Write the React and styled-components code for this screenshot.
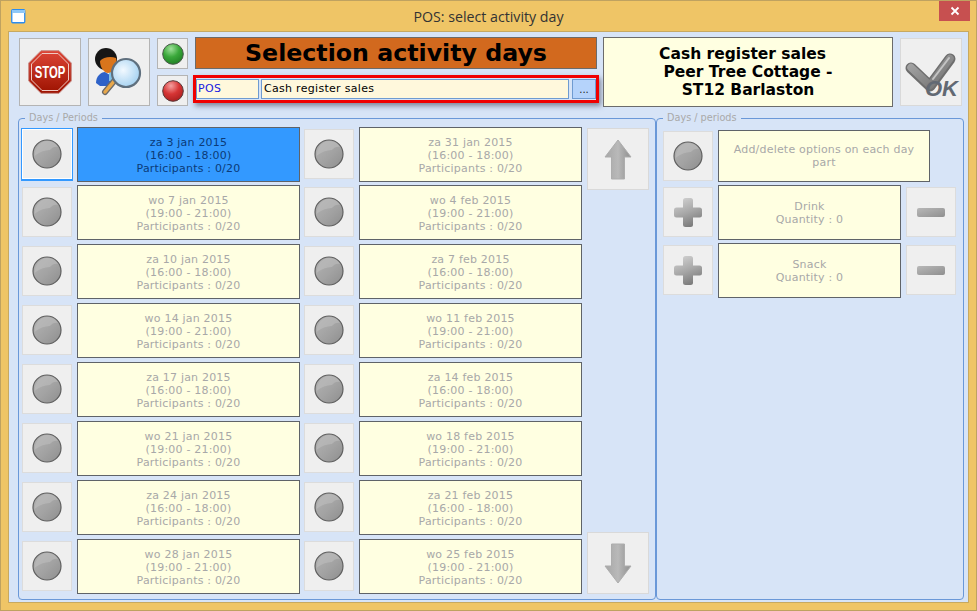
import React from "react";
import styled, { createGlobalStyle } from "styled-components";

const Global = createGlobalStyle`
  html, body { margin: 0; padding: 0; background: #fff; }
  * { box-sizing: border-box; }
`;

const Win = styled.div`
  width: 977px; height: 611px; background: #efc566;
  border: 1px solid #bfa260; display: flex; flex-direction: column;
  font-family: "DejaVu Sans", Verdana, sans-serif; overflow: hidden;
`;
const TitleBar = styled.div`
  height: 30px; flex: none; display: flex; align-items: center; position: relative;
  padding-left: 10px;
`;
const TitleText = styled.div`
  position: absolute; left: 0; right: 0; top: 7px; text-align: center;
  font: 14.2px/17px "Open Sans", "Noto Sans", sans-serif; color: #333;
`;
const CloseBtn = styled.div`
  position: absolute; right: 6px; top: 0; width: 31px; height: 20px; background: #c75050;
  display: flex; align-items: center; justify-content: center;
`;
const Client = styled.div`
  margin: 0 7px; height: 572px; background: #d7e4f7;
  border: 1px solid #c7a961; padding: 5px 5px 0 10px;
  display: flex; flex-direction: column;
`;
const Top = styled.div`
  display: flex; height: 70px; flex: none;
`;
const BigBtn = styled.div`
  width: ${p => p.$w || 62}px; height: ${p => p.$h || 68}px;
  background: #efefef; border: 1px solid ${p => p.$faint ? "#d9d9d9" : "#b4b4b4"};
  display: flex; align-items: center; justify-content: center; flex: none;
`;
const SearchSlot = styled.div` margin-left: 7px; `;
const Lights = styled.div`
  margin: 1px 0 0 7px; width: 31px; display: flex; flex-direction: column; gap: 6px; flex: none;
`;
const Middle = styled.div`
  margin-left: 7px; width: 402px; display: flex; flex-direction: column; flex: none;
`;
const Banner = styled.div`
  height: 32px; background: #d2691e; border: 1px solid #6b6b6b; text-align: center;
  font: bold 23.7px/30px "DejaVu Sans", sans-serif; color: #000;
`;
const RedBox = styled.div`
  margin: 6px -2px 0; height: 28px; border: 3px solid #f00000;
  box-shadow: 2px 3px 5px rgba(60,60,80,.55);
  display: flex; padding-top: 1px; background: #d7e4f7;
`;
const Code = styled.div`
  width: 63px; height: 20px; background: #fff8dc; border: 1px solid #6f9bd1;
  font-size: 11px; line-height: 18px; padding-left: 1px; color: #1a1ae0; letter-spacing: .3px;
`;
const Name = styled.div`
  margin-left: 2px; width: 308px; height: 20px; background: #fff8dc; border: 1px solid #6f9bd1;
  font-size: 11px; line-height: 18px; padding-left: 2px; color: #000; letter-spacing: .3px;
`;
const Dots = styled.div`
  margin-left: 3px; width: 24px; height: 20px; background: #b5d3fb; border: 1px solid #6f9bd1;
  font-size: 10px; line-height: 20px; text-align: center; color: #222;
`;
const Info = styled.div`
  margin-left: 6px; width: 290px; height: 70px; background: #ffffe1; border: 1px solid #6b6b6b;
  font: bold 15.5px/18px "DejaVu Sans", sans-serif; color: #000; text-align: center;
  padding-top: 7px; white-space: pre-wrap; flex: none;
`;
const OkSlot = styled.div` margin-left: 7px; margin-top: 1px; `;
const StopSlot = styled.div` margin-top: 1px; `;

const Panels = styled.div`
  display: flex; margin: 5px 0 0 -1px; align-items: flex-start;
`;
const Field = styled.fieldset`
  margin: 0; min-width: 0; border: 1px solid #6a98d8; border-radius: 4px;
  height: 488px; width: ${p => p.$w}px; padding: ${p => p.$pad}; flex: none;
`;
const Legend = styled.legend`
  margin-left: ${p => p.$ml}px; padding: 0 4px; font-size: 9.7px; line-height: 12px; color: #a9a9a9; height: 12px;
`;
const LeftBody = styled.div` display: flex; `;
const Columns = styled.div`
  display: grid; grid-template-columns: 278px 278px; column-gap: 4px; row-gap: 4px;
  grid-template-rows: 54px repeat(7, 55px); width: 560px; flex: none;
`;
const Row = styled.div` display: flex; gap: 5px; align-items: flex-start; `;
const SmallBtn = styled.div`
  width: 50px; height: 50px; flex: none; background: #efefef; margin-top: ${p => p.$mt ?? 2}px;
  border: 1px solid ${p => p.$active ? "#fff" : "#dcdcdc"};
  box-shadow: ${p => p.$active ? "0 0 0 1px #3399ff, 0 1px 0 1px #3399ff" : "none"};
  display: flex; align-items: center; justify-content: center;
`;
const Card = styled.div`
  width: ${p => p.$w || 223}px; height: ${p => p.$h || 55}px; flex: none;
  background: ${p => p.$active ? "#3399ff" : "#ffffe1"};
  border: 1px solid #5f6368; padding-top: ${p => p.$pt || 0}px;
  color: ${p => p.$active ? "#0b3b78" : "#a8a8a8"};
  font-size: 11px; line-height: 13px; text-align: center;
  display: flex; flex-direction: column; justify-content: center;
  letter-spacing: .2px;
`;
const Arrows = styled.div`
  margin: 1px 0 0 5px; height: 466px; display: flex; flex-direction: column; justify-content: space-between; flex: none;
`;
const RightRows = styled.div` display: flex; flex-direction: column; gap: 3px; `;
const RightRow = styled.div` display: flex; align-items: flex-start; gap: 5px; `;

const GreyBall = ({ id }) => (
  <svg width="30" height="30" viewBox="0 0 30 30">
    <defs>
      <linearGradient id={id} x1="0" y1="0" x2="1" y2="1">
        <stop offset="0" stopColor="#b4b4b4" />
        <stop offset=".55" stopColor="#a2a2a2" />
        <stop offset="1" stopColor="#8e8e8e" />
      </linearGradient>
    </defs>
    <circle cx="15" cy="15" r="14" fill={`url(#${id})`} stroke="#5f5f5f" strokeWidth="1.200" />
    <path d="M2.500 17C3 9 8 2 15 2c5 0 9 2 11 6-4-1-6 1-8 3-5 0-11 2-15.500 6z" fill="#c0c0c0" opacity=".55" />
  </svg>
);
const Light = ({ id, c, edge }) => (
  <svg width="22" height="22" viewBox="0 0 22 22">
    <defs>
      <radialGradient id={id} cx="40%" cy="25%" r="80%">
        <stop offset="0" stopColor={c[0]} />
        <stop offset=".5" stopColor={c[1]} />
        <stop offset="1" stopColor={c[2]} />
      </radialGradient>
    </defs>
    <circle cx="11" cy="11" r="10.300" fill={`url(#${id})`} stroke={edge} strokeWidth="1" />
  </svg>
);
const Plus = ({ id }) => (
  <svg width="28" height="29" viewBox="0 0 28 29">
    <defs>
      <linearGradient id={id} gradientUnits="userSpaceOnUse" x1="8" y1="0" x2="20" y2="29">
        <stop offset="0" stopColor="#cfcfcf" />
        <stop offset=".5" stopColor="#a6a6a6" />
        <stop offset="1" stopColor="#767676" />
      </linearGradient>
    </defs>
    <rect x="9" y="0" width="10" height="29" rx="2.500" fill={`url(#${id})`} />
    <rect x="0" y="9.500" width="28" height="10" rx="2.500" fill={`url(#${id})`} />
  </svg>
);
const Minus = ({ id }) => (
  <svg width="28" height="9" viewBox="0 0 28 9">
    <defs>
      <linearGradient id={id} x1="0" y1="0" x2="1" y2="1">
        <stop offset="0" stopColor="#b8b8b8" />
        <stop offset="1" stopColor="#8f8f8f" />
      </linearGradient>
    </defs>
    <rect x="0" y="0" width="28" height="9" rx="2" fill={`url(#${id})`} />
  </svg>
);
const Arrow = ({ id, down }) => (
  <svg width="28" height="41" viewBox="0 0 28 41" style={down ? { transform: "scaleY(-1)" } : undefined}>
    <defs>
      <linearGradient id={id} x1="0" y1="0" x2="1" y2="0">
        <stop offset="0" stopColor="#a6a6a6" />
        <stop offset=".5" stopColor="#b9b9b9" />
        <stop offset="1" stopColor="#8f8f8f" />
      </linearGradient>
    </defs>
    <path d="M14 1 27 18H20.500V40H7.500V18H1z" fill={`url(#${id})`} stroke="#adadad" strokeWidth="1" />
  </svg>
);
const Stop = () => (
  <svg width="44" height="44" viewBox="0 0 44 44">
    <defs>
      <linearGradient id="st" x1="0" y1="0" x2="0" y2="1">
        <stop offset="0" stopColor="#dd4536" />
        <stop offset="1" stopColor="#9c1200" />
      </linearGradient>
    </defs>
    <path d="M13 .7H31L43.300 13V31L31 43.300H13L.7 31V13z" fill="url(#st)" stroke="#c98c86" strokeWidth="1" />
    <path d="M14 3.500H30L40.500 14V30L30 40.500H14L3.500 30V14z" fill="none" stroke="#efc9c2" strokeWidth="1" />
    <text transform="translate(22 28) scale(.71 1)" textAnchor="middle" fontFamily="'Liberation Sans',sans-serif" fontWeight="700" fontSize="16" fill="#fff">STOP</text>
  </svg>
);
const Finder = () => (
  <svg width="50" height="50" viewBox="0 0 50 50">
    <defs>
      <radialGradient id="lens" cx="40%" cy="40%" r="60%">
        <stop offset="0" stopColor="#f2f9ff" />
        <stop offset="1" stopColor="#a9d4f2" />
      </radialGradient>
      <filter id="soft"><feGaussianBlur stdDeviation=".5" /></filter>
    </defs>
    <g filter="url(#soft)">
      <path d="M2 36C2 29 7 25 11 25L21 31 16 39 6 39z" fill="#2f62c8" />
      <path d="M15 25h8v9h-8z" fill="#7fc2e8" />
      <circle cx="12" cy="12" r="11" fill="#191919" />
      <path d="M6 14c3-4 11-5 16-3 2 6-2 15-8 15-4 0-8-6-8-12z" fill="#d9741c" />
      <path d="M21 33 L11 45" stroke="#6b6b6b" strokeWidth="6" strokeLinecap="round" />
      <path d="M21 33 L11 45" stroke="#e8a84c" strokeWidth="3.500" strokeLinecap="round" />
      <circle cx="32" cy="26" r="14" fill="url(#lens)" stroke="#5f6f7e" strokeWidth="2.200" />
    </g>
  </svg>
);
const Check = () => (
  <svg width="60" height="60" viewBox="0 0 60 60">
    <defs>
      <linearGradient id="ck" x1="0" y1="0" x2="1" y2="1">
        <stop offset="0" stopColor="#a8a8a8" />
        <stop offset="1" stopColor="#707070" />
      </linearGradient>
    </defs>
    <path d="M10 26 29 44 49 17" fill="none" stroke="#6e6e6e" strokeWidth="11" strokeLinecap="round" strokeLinejoin="round" />
    <path d="M10 25.500 29 43.500 49 16.500" fill="none" stroke="url(#ck)" strokeWidth="7.500" strokeLinecap="round" strokeLinejoin="round" />
    <path d="M32 37 48 16" stroke="#c4c4c4" strokeWidth="2" strokeLinecap="round" />
    <text x="24" y="54" fontFamily="'Liberation Sans',sans-serif" fontStyle="italic" fontWeight="700" fontSize="22" fill="#626973">OK</text>
  </svg>
);

const left = [
  ["za 3 jan 2015", "(16:00 - 18:00)"],
  ["wo 7 jan 2015", "(19:00 - 21:00)"],
  ["za 10 jan 2015", "(16:00 - 18:00)"],
  ["wo 14 jan 2015", "(19:00 - 21:00)"],
  ["za 17 jan 2015", "(16:00 - 18:00)"],
  ["wo 21 jan 2015", "(19:00 - 21:00)"],
  ["za 24 jan 2015", "(16:00 - 18:00)"],
  ["wo 28 jan 2015", "(19:00 - 21:00)"],
];
const right = [
  ["za 31 jan 2015", "(16:00 - 18:00)"],
  ["wo 4 feb 2015", "(19:00 - 21:00)"],
  ["za 7 feb 2015", "(16:00 - 18:00)"],
  ["wo 11 feb 2015", "(19:00 - 21:00)"],
  ["za 14 feb 2015", "(16:00 - 18:00)"],
  ["wo 18 feb 2015", "(19:00 - 21:00)"],
  ["za 21 feb 2015", "(16:00 - 18:00)"],
  ["wo 25 feb 2015", "(19:00 - 21:00)"],
];
const cells = left.flatMap((l, i) => [{ d: l, k: "l" + i }, { d: right[i], k: "r" + i }]);

export default function App() {
  return (
    <Win>
      <Global />
      <TitleBar>
        <svg width="15" height="15" viewBox="0 0 15 15">
          <rect x=".75" y=".75" width="13" height="13" rx="1" fill="#fff" stroke="#2a8cf0" strokeWidth="1.300" />
          <rect x="1" y="1" width="13" height="3" fill="#8fc8f8" />
        </svg>
        <TitleText>POS: select activity day</TitleText>
        <CloseBtn>
          <svg width="10" height="10" viewBox="0 0 10 10"><path d="M1.500 1.500 8.500 8.500M8.500 1.500 1.500 8.500" stroke="#fff" strokeWidth="1.800" /></svg>
        </CloseBtn>
      </TitleBar>
      <Client>
        <Top>
          <StopSlot><BigBtn><Stop /></BigBtn></StopSlot>
          <SearchSlot><StopSlot><BigBtn><Finder /></BigBtn></StopSlot></SearchSlot>
          <Lights>
            <BigBtn $w={31} $h={31}><Light id="green" c={["#9fe09a", "#3aa83a", "#1f7d22"]} edge="#4a5a4a" /></BigBtn>
            <BigBtn $w={31} $h={31}><Light id="red" c={["#f5a0a0", "#d63535", "#a81d1d"]} edge="#5a3a3a" /></BigBtn>
          </Lights>
          <Middle>
            <Banner>Selection activity days</Banner>
            <RedBox>
              <Code>POS</Code>
              <Name>Cash register sales</Name>
              <Dots>...</Dots>
            </RedBox>
          </Middle>
          <Info>{"Cash register sales\u00a0\u00a0\nPeer Tree Cottage -\nST12 Barlaston"}</Info>
          <OkSlot><BigBtn $faint><Check /></BigBtn></OkSlot>
        </Top>
        <Panels>
          <Field $w={638} $pad="3px 3px 0 3px">
            <Legend $ml={3}>Days / Periods</Legend>
            <LeftBody>
              <Columns>
                {cells.map((c, i) => (
                  <Row key={c.k}>
                    <SmallBtn $active={i === 0}><GreyBall id={"b" + i} /></SmallBtn>
                    <Card $active={i === 0} $pt={2}>
                      <span>{c.d[0]}</span>
                      <span>{c.d[1]}</span>
                      <span>Participants : 0/20</span>
                    </Card>
                  </Row>
                ))}
              </Columns>
              <Arrows>
                <BigBtn $faint $h={62}><Arrow id="au" /></BigBtn>
                <BigBtn $faint $h={62}><Arrow id="ad" down /></BigBtn>
              </Arrows>
            </LeftBody>
          </Field>
          <Field $w={308} $pad="6px 0 0 6px">
            <Legend $ml={0}>Days / periods</Legend>
            <RightRows>
              <RightRow>
                <SmallBtn $mt={1}><GreyBall id="ropt" /></SmallBtn>
                <Card $w={212} $h={52}><span>Add/delete options on each day</span><span>part</span></Card>
              </RightRow>
              <RightRow>
                <SmallBtn><Plus id="p1" /></SmallBtn>
                <Card $w={183}><span>Drink</span><span>Quantity : 0</span></Card>
                <SmallBtn><Minus id="m1" /></SmallBtn>
              </RightRow>
              <RightRow>
                <SmallBtn><Plus id="p2" /></SmallBtn>
                <Card $w={183}><span>Snack</span><span>Quantity : 0</span></Card>
                <SmallBtn><Minus id="m2" /></SmallBtn>
              </RightRow>
            </RightRows>
          </Field>
        </Panels>
      </Client>
    </Win>
  );
}
